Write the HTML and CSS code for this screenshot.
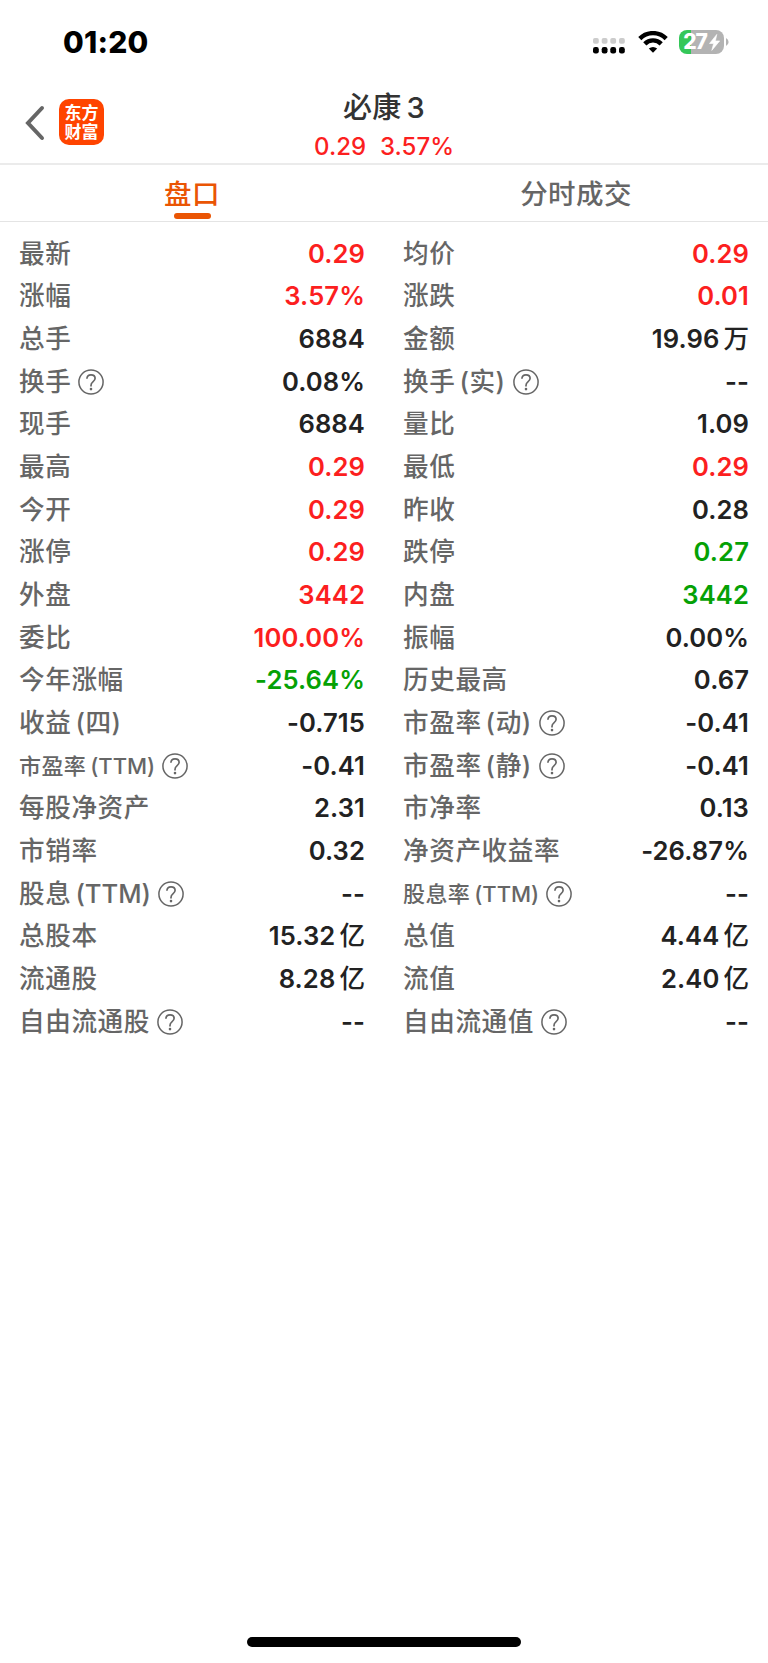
FILE: index.html
```html
<!DOCTYPE html>
<html lang="zh-CN">
<head>
<meta charset="utf-8">
<title>必康3 盘口</title>
<link rel="stylesheet" href="styles.css">
</head>
<body>
<svg class="defs" width="0" height="0" aria-hidden="true">
  <symbol id="help" viewBox="0 0 26 26">
    <g fill="none" stroke="currentColor" stroke-width="1.5">
      <circle cx="13" cy="13" r="12.1"/>
      <path d="M8.9 9.7C9 7.2 10.6 5.8 13 5.8c2.4 0 4.1 1.4 4.1 3.5 0 1.7-.9 2.6-2.2 3.6-1.4 1.1-1.9 1.8-1.9 3.6v1" stroke-width="1.7"/>
    </g>
    <circle cx="13" cy="20.1" r="1.3" fill="currentColor"/>
  </symbol>
</svg>
<div class="screen">
  <div class="status">
    <span class="time">01:20</span>
    <div class="indicators">
      <svg class="cell" width="32" height="16" viewBox="0 0 32 16">
        <g fill="#ccc"><rect x="0" y="0" width="5.8" height="5.8" rx="1.8"/><rect x="8.7" y="0" width="5.8" height="5.8" rx="1.8"/><rect x="17.3" y="0" width="5.8" height="5.8" rx="1.8"/><rect x="26" y="0" width="5.8" height="5.8" rx="1.8"/></g>
        <g fill="#000"><rect x="0" y="9" width="5.8" height="6.4" rx="2.2"/><rect x="8.7" y="9" width="5.8" height="6.4" rx="2.2"/><rect x="17.3" y="9" width="5.8" height="6.4" rx="2.2"/><rect x="26" y="9" width="5.8" height="6.4" rx="2.2"/></g>
      </svg>
      <svg class="wifi" width="30" height="22" viewBox="0 0 30 22">
        <g fill="none" stroke="#000" stroke-width="4.4">
          <path d="M1.8 7.6a18.6 18.6 0 0 1 26.4 0"/>
          <path d="M6.8 12.9a11.4 11.4 0 0 1 16.4 0"/>
        </g>
        <path d="M15 21.8l-4.2-4.2q4.2-3.2 8.4 0z"/>
      </svg>
      <div class="battery">
        <span class="level">27</span>
        <svg width="11" height="17" viewBox="0 0 11 17"><path d="M7.8.4.5 9.5h4.1L2.8 16.4 10.7 6.9H6.4z" fill="#fff" stroke="#fff" stroke-width=".6"/></svg>
      </div>
      <svg class="nub" width="3" height="8" viewBox="0 0 3 8"><path d="M0 0q2.6 1.3 2.6 4T0 8z" fill="#b3b3b3"/></svg>
    </div>
  </div>

  <header class="header">
    <div class="nav">
      <svg width="20" height="36" viewBox="0 0 20 36"><path d="M17 3 3 18l14 15" fill="none" stroke="#666" stroke-width="4" stroke-linecap="round" stroke-linejoin="miter"/></svg>
      <div class="logo"><span>东方</span><span>财富</span></div>
    </div>
    <div class="heading">
      <div class="title">必康<span class="num">3</span></div>
      <div class="quote"><span>0.29</span><span>3.57%</span></div>
    </div>
  </header>

  <nav class="tabs">
    <div class="tab active">盘口</div>
    <div class="tab">分时成交</div>
  </nav>

  <main class="grid">
    <div class="row"><span class="label">最新</span><span class="value up">0.29</span></div>
    <div class="row"><span class="label">均价</span><span class="value up">0.29</span></div>
    <div class="row"><span class="label">涨幅</span><span class="value up">3.57%</span></div>
    <div class="row"><span class="label">涨跌</span><span class="value up">0.01</span></div>
    <div class="row"><span class="label">总手</span><span class="value">6884</span></div>
    <div class="row"><span class="label">金额</span><span class="value">19.96<span class="unit">万</span></span></div>
    <div class="row"><span class="label">换手</span><svg class="help"><use href="#help"/></svg><span class="value">0.08%</span></div>
    <div class="row"><span class="label">换手<span class="paren">(实)</span></span><svg class="help"><use href="#help"/></svg><span class="value">--</span></div>
    <div class="row"><span class="label">现手</span><span class="value">6884</span></div>
    <div class="row"><span class="label">量比</span><span class="value">1.09</span></div>
    <div class="row"><span class="label">最高</span><span class="value up">0.29</span></div>
    <div class="row"><span class="label">最低</span><span class="value up">0.29</span></div>
    <div class="row"><span class="label">今开</span><span class="value up">0.29</span></div>
    <div class="row"><span class="label">昨收</span><span class="value">0.28</span></div>
    <div class="row"><span class="label">涨停</span><span class="value up">0.29</span></div>
    <div class="row"><span class="label">跌停</span><span class="value down">0.27</span></div>
    <div class="row"><span class="label">外盘</span><span class="value up">3442</span></div>
    <div class="row"><span class="label">内盘</span><span class="value down">3442</span></div>
    <div class="row"><span class="label">委比</span><span class="value up">100.00%</span></div>
    <div class="row"><span class="label">振幅</span><span class="value">0.00%</span></div>
    <div class="row"><span class="label">今年涨幅</span><span class="value down">-25.64%</span></div>
    <div class="row"><span class="label">历史最高</span><span class="value">0.67</span></div>
    <div class="row"><span class="label">收益<span class="paren">(四)</span></span><span class="value">-0.715</span></div>
    <div class="row"><span class="label">市盈率<span class="paren">(动)</span></span><svg class="help"><use href="#help"/></svg><span class="value">-0.41</span></div>
    <div class="row"><span class="label small">市盈率<span class="paren latin">(TTM)</span></span><svg class="help"><use href="#help"/></svg><span class="value">-0.41</span></div>
    <div class="row"><span class="label">市盈率<span class="paren">(静)</span></span><svg class="help"><use href="#help"/></svg><span class="value">-0.41</span></div>
    <div class="row"><span class="label">每股净资产</span><span class="value">2.31</span></div>
    <div class="row"><span class="label">市净率</span><span class="value">0.13</span></div>
    <div class="row"><span class="label">市销率</span><span class="value">0.32</span></div>
    <div class="row"><span class="label">净资产收益率</span><span class="value">-26.87%</span></div>
    <div class="row"><span class="label">股息<span class="paren latin">(TTM)</span></span><svg class="help"><use href="#help"/></svg><span class="value">--</span></div>
    <div class="row"><span class="label small">股息率<span class="paren latin">(TTM)</span></span><svg class="help"><use href="#help"/></svg><span class="value">--</span></div>
    <div class="row"><span class="label">总股本</span><span class="value">15.32<span class="unit">亿</span></span></div>
    <div class="row"><span class="label">总值</span><span class="value">4.44<span class="unit">亿</span></span></div>
    <div class="row"><span class="label">流通股</span><span class="value">8.28<span class="unit">亿</span></span></div>
    <div class="row"><span class="label">流值</span><span class="value">2.40<span class="unit">亿</span></span></div>
    <div class="row"><span class="label">自由流通股</span><svg class="help"><use href="#help"/></svg><span class="value">--</span></div>
    <div class="row"><span class="label">自由流通值</span><svg class="help"><use href="#help"/></svg><span class="value">--</span></div>
  </main>

  <div class="home-bar"></div>
</div>
</body>
</html>
```

FILE: styles.css
```css
* { box-sizing: border-box; }

body {
  margin: 0;
  background: #fff;
  font-family: Inter, "Noto Sans CJK SC", sans-serif;
  font-weight: 500;
  color: #222;
}

.defs { display: block; }

.screen {
  width: 768px;
  height: 1663px;
  display: flex;
  flex-direction: column;
}

.status {
  height: 84px;
  padding: 0 39px 0 63px;
  display: flex;
  align-items: center;
  justify-content: space-between;
}

.time {
  font-size: 30px;
  font-weight: 800;
  letter-spacing: 0.2px;
  color: #000;
}

.indicators { display: flex; align-items: center; }
.cell { margin-top: 8px; }
.wifi { margin: 0 11px 0 13px; }

.battery {
  width: 45px;
  height: 24px;
  border-radius: 8px;
  background: linear-gradient(to right, #34c759 12px, #b3b3b3 12px);
  display: flex;
  align-items: center;
  justify-content: center;
  gap: 2px;
}

.level {
  font-size: 21px;
  line-height: 24px;
  font-weight: 800;
  color: #fff;
  letter-spacing: -1.2px;
}

.nub { margin-left: 2px; }

.header {
  height: 81px;
  border-bottom: 2px solid #ebebeb;
  display: grid;
  grid-template-columns: 1fr auto 1fr;
}

.nav {
  padding: 15px 0 0 25px;
  display: flex;
  align-items: flex-start;
  gap: 14px;
}

.nav > svg { margin-top: 6px; }

.logo {
  width: 45px;
  height: 46px;
  border-radius: 10px;
  background: #ff4400;
  color: #fff;
  font-size: 17px;
  font-weight: 700;
  line-height: 19px;
  padding-top: 5px;
  display: flex;
  flex-direction: column;
  align-items: center;
}

.heading {
  padding-top: 2px;
  display: flex;
  flex-direction: column;
  align-items: center;
}

.title {
  font-size: 29px;
  line-height: 43px;
  letter-spacing: 0.3px;
  color: #333;
}

.title .num { margin-left: 5px; }

.quote {
  display: flex;
  gap: 14px;
  font-size: 24px;
  line-height: 35px;
  color: #fc1f1f;
}

.tabs {
  height: 57px;
  border-bottom: 1px solid #e4e4e4;
  display: grid;
  grid-template-columns: 1fr 1fr;
}

.tab {
  display: flex;
  flex-direction: column;
  align-items: center;
  font-size: 27.5px;
  line-height: 48px;
  letter-spacing: 0.4px;
  padding-top: 5px;
  color: #666;
}

.tab.active { color: #ea5504; }

.tab.active::after {
  content: "";
  width: 37px;
  height: 6px;
  margin-top: -5px;
  border-radius: 3px;
  background: #ea5504;
}

.grid {
  padding-top: 10.4px;
  display: grid;
  grid-template-columns: 1fr 1fr;
  grid-auto-rows: 42.67px;
}

.row {
  padding: 0 19px;
  display: flex;
  align-items: center;
  font-size: 25.6px;
  line-height: 42px;
  white-space: nowrap;
}

.label { color: #666; letter-spacing: 0.6px; }
.label.small { font-size: 22px; letter-spacing: 0.4px; }
.paren { margin-left: 4px; }
.latin { letter-spacing: 0; }

.help {
  width: 26px;
  height: 26px;
  margin-left: 7px;
  color: #666;
}

.value { margin-left: auto; font-weight: 600; letter-spacing: 0.1px; }
.unit { margin-left: 4px; font-weight: 500; letter-spacing: 0; }
.up { color: #fc1f1f; }
.down { color: #05a105; }

.home-bar {
  width: 274px;
  height: 10px;
  margin: auto auto 16px;
  border-radius: 5px;
  background: #000;
}
```
